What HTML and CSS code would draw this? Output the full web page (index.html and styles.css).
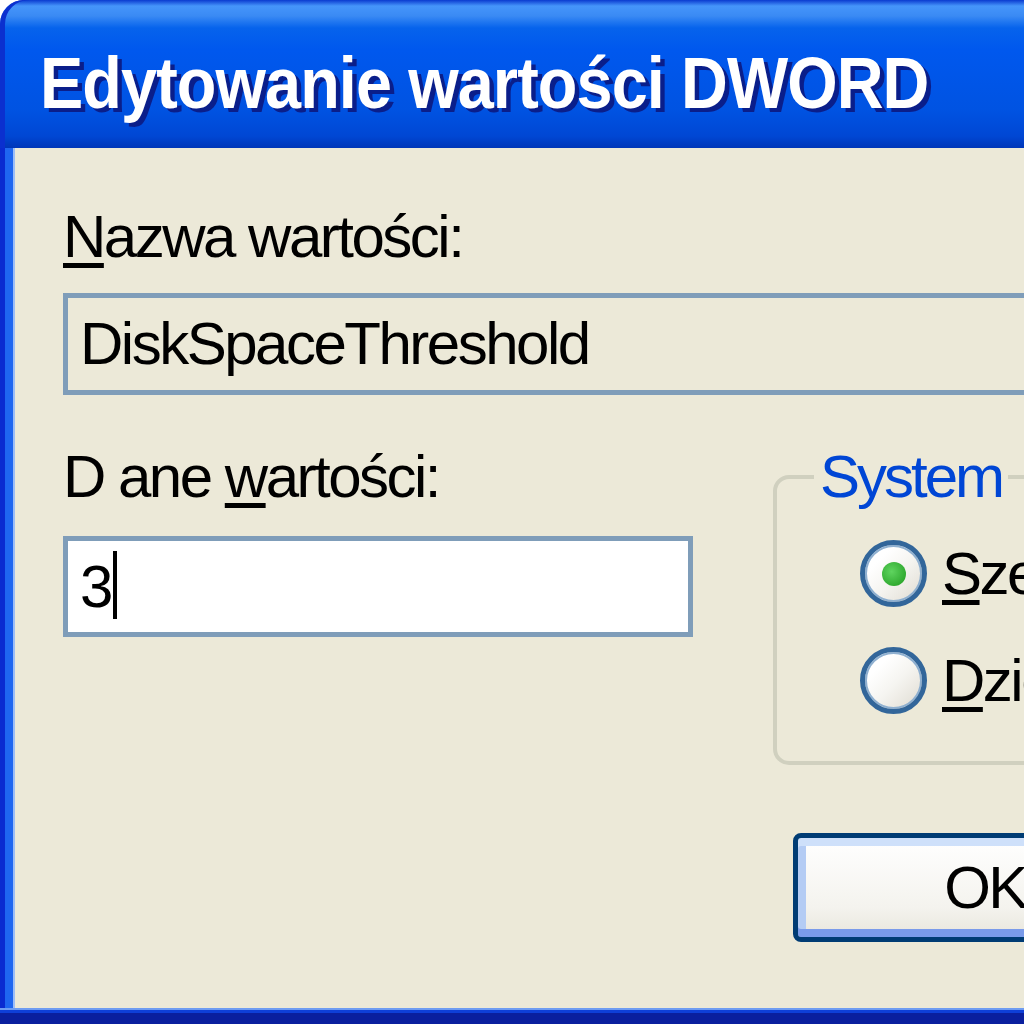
FILE: index.html
```html
<html>
<head>
    <meta charset="UTF-8">
    <title>Edytowanie wartości DWORD</title>
    <link rel="stylesheet" href="styles.css">
</head>
<body>
<div class="window">
    <div class="titlebar"><span class="title-text">Edytowanie wartości DWORD</span></div>
    <div class="frame">
        <div class="label"><u>N</u>azwa wartości:</div>
        <div class="field readonly">DiskSpaceThreshold</div>
        <div class="lower">
            <div class="data">
                <div class="label">D ane <u>w</u>artości:</div>
                <div class="field edit">3<span class="caret"></span></div>
            </div>
            <div class="side">
                <fieldset class="group">
                    <legend>System</legend>
                    <div class="radio-row">
                        <span class="radio checked"></span>
                        <span class="radio-text"><u>S</u>zesnastkowy</span>
                    </div>
                    <div class="radio-row">
                        <span class="radio"></span>
                        <span class="radio-text"><u>D</u>ziesiętny</span>
                    </div>
                </fieldset>
                <button class="btn">OK</button>
            </div>
        </div>
    </div>
</div>
</body>
</html>
```

FILE: styles.css
```css
*{
    padding: 0;
    margin: 0;
    box-sizing: border-box;
}
html, body{
    width: 1024px;
    height: 1024px;
    overflow: hidden;
    background: #fff;
}
.window{
    width: 1200px;
    height: 1024px;
    display: flex;
    flex-direction: column;
    font-family: "Liberation Sans", Arial, sans-serif;
}
/* blue XP title bar */
.titlebar{
    height: 148px;
    flex: none;
    padding: 47px 0 0 40px;
    border-top-left-radius: 24px;
    background: linear-gradient(to bottom, #0A3BD0 0, #4595FA 6px, #3A8AF4 16px, #0663EC 28px, #0058EE 50px, #0053E2 110px, #0047D4 136px, #0036B8 148px);
    box-shadow: inset 5px 0 0 #0B30CF;
    color: #fff;
    font-weight: bold;
    font-size: 72px;
    line-height: 1;
    white-space: nowrap;
}
/* the XP caption font is narrow, so squeeze the bold face */
.title-text{
    display: inline-block;
    letter-spacing: -1px;
    transform: scaleX(0.9);
    transform-origin: left center;
    text-shadow: 5px 4px 0 #0A1E8A;
}
.frame{
    flex: 1;
    background: #ECE9D8;
    padding: 59px 40px 0 63px;
    box-shadow: inset 0 -11px 0 #0A1F9E, inset 0 -14px 0 #0E3FD8, inset 0 -16px 0 #6E9CF2,
                inset 5px 0 0 #0A2BD0, inset 13px 0 0 #1F66F0, inset 15px 0 0 #9CBDF7;
    font-size: 60px;
    letter-spacing: -2.5px;
    color: #000;
}
.label{
    line-height: 60px;
    white-space: nowrap;
}
u{
    text-decoration-thickness: 5px;
    text-underline-offset: 6px;
}
.field{
    border: 5px solid #7F9DB9;
    padding-left: 12px;
    white-space: nowrap;
}
.readonly{
    margin-top: 26px;
    height: 102px;
    line-height: 92px;
}
.lower{
    display: flex;
    margin-top: 52px;
}
.data{
    width: 630px;
    flex: none;
}
.edit{
    margin-top: 29px;
    height: 101px;
    line-height: 91px;
    background: #fff;
}
.caret{
    display: inline-block;
    width: 4px;
    height: 68px;
    margin-left: 2px;
    background: #000;
    vertical-align: -12px;
}
.side{
    margin-left: 80px;
    width: 480px;
    flex: none;
}
.group{
    border: 4px solid #D0D0BF;
    border-radius: 16px;
    padding: 0 0 47px 83px;
}
.group legend{
    margin-left: -46px;
    padding: 0 6px;
    color: #0046D5;
    line-height: 60px;
    letter-spacing: -3px;
}
.radio-row{
    display: flex;
    align-items: center;
    height: 67px;
    margin-top: 33px;
    white-space: nowrap;
}
.radio-row + .radio-row{
    margin-top: 40px;
}
.radio{
    width: 67px;
    height: 67px;
    flex: none;
    border-radius: 50%;
    border: 5px solid #32669A;
    box-shadow: inset 0 0 0 2px #8FB0D0;
    background: linear-gradient(135deg, #fff 25%, #F5F4F0 55%, #DEDAD0 100%);
    display: flex;
    align-items: center;
    justify-content: center;
}
.radio.checked::after{
    content: "";
    width: 24px;
    height: 24px;
    border-radius: 50%;
    background: radial-gradient(circle at 40% 40%, #5FD45F, #1E9A1E);
}
.radio-text{
    margin-left: 15px;
    line-height: 60px;
}
.btn{
    display: block;
    margin: 68px 0 0 20px;
    width: 384px;
    height: 109px;
    border: 5px solid #003C74;
    border-radius: 8px;
    background: linear-gradient(to bottom, #FFFFFF, #F4F3EE 70%, #E8E6DC);
    box-shadow: inset 0 8px 0 #CEE0FA, inset 0 -8px 0 #7A9BEA, inset 8px 0 0 #B4CCF4, inset -8px 0 0 #B4CCF4;
    font-family: "Liberation Sans", Arial, sans-serif;
    font-size: 60px;
    letter-spacing: -2.5px;
    color: #000;
    line-height: 99px;
}
```
